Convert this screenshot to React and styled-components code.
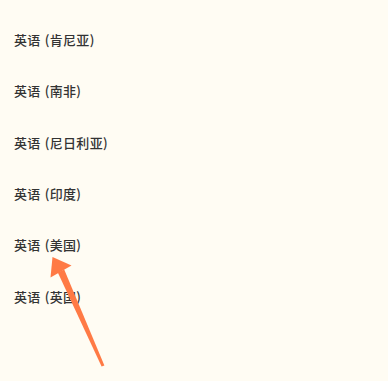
import React from "react";
import styled, { createGlobalStyle } from "styled-components";

const GlobalStyle = createGlobalStyle`
  html, body {
    margin: 0;
    padding: 0;
    background: #fffcf3;
  }
`;

const Page = styled.div`
  position: relative;
  width: 388px;
  height: 381px;
  overflow: hidden;
  background: #fffcf3;
  padding-top: 14px;
  box-sizing: border-box;
`;

const List = styled.ul`
  list-style: none;
  margin: 0;
  padding: 0;
`;

const Item = styled.li`
  height: 51.3px;
  display: flex;
  align-items: center;
  padding-left: 14px;
  font-family: "Noto Sans CJK SC", "Noto Sans", sans-serif;
  font-size: 13px;
  font-weight: 500;
  letter-spacing: 0.3px;
  word-spacing: 1px;
  color: #333333;
`;

const Arrow = styled.svg`
  position: absolute;
  left: 0;
  top: 0;
  width: 388px;
  height: 381px;
  pointer-events: none;
`;

const languages = [
  "英语 (肯尼亚)",
  "英语 (南非)",
  "英语 (尼日利亚)",
  "英语 (印度)",
  "英语 (美国)",
  "英语 (英国)",
];

const App = () => {
  return (
    <Page>
      <GlobalStyle />
      <List>
        {languages.map((name) => (
          <Item key={name}>{name}</Item>
        ))}
      </List>
      <Arrow viewBox="0 0 388 381">
        <polygon points="52.5,257 50.5,277.5 71.5,265.5" fill="#ff7a45" />
        <polygon
          points="64.2,269.4 104.4,365.4 101.6,366.6 57.8,272.6"
          fill="#ff7a45"
        />
      </Arrow>
    </Page>
  );
};

export default App;
